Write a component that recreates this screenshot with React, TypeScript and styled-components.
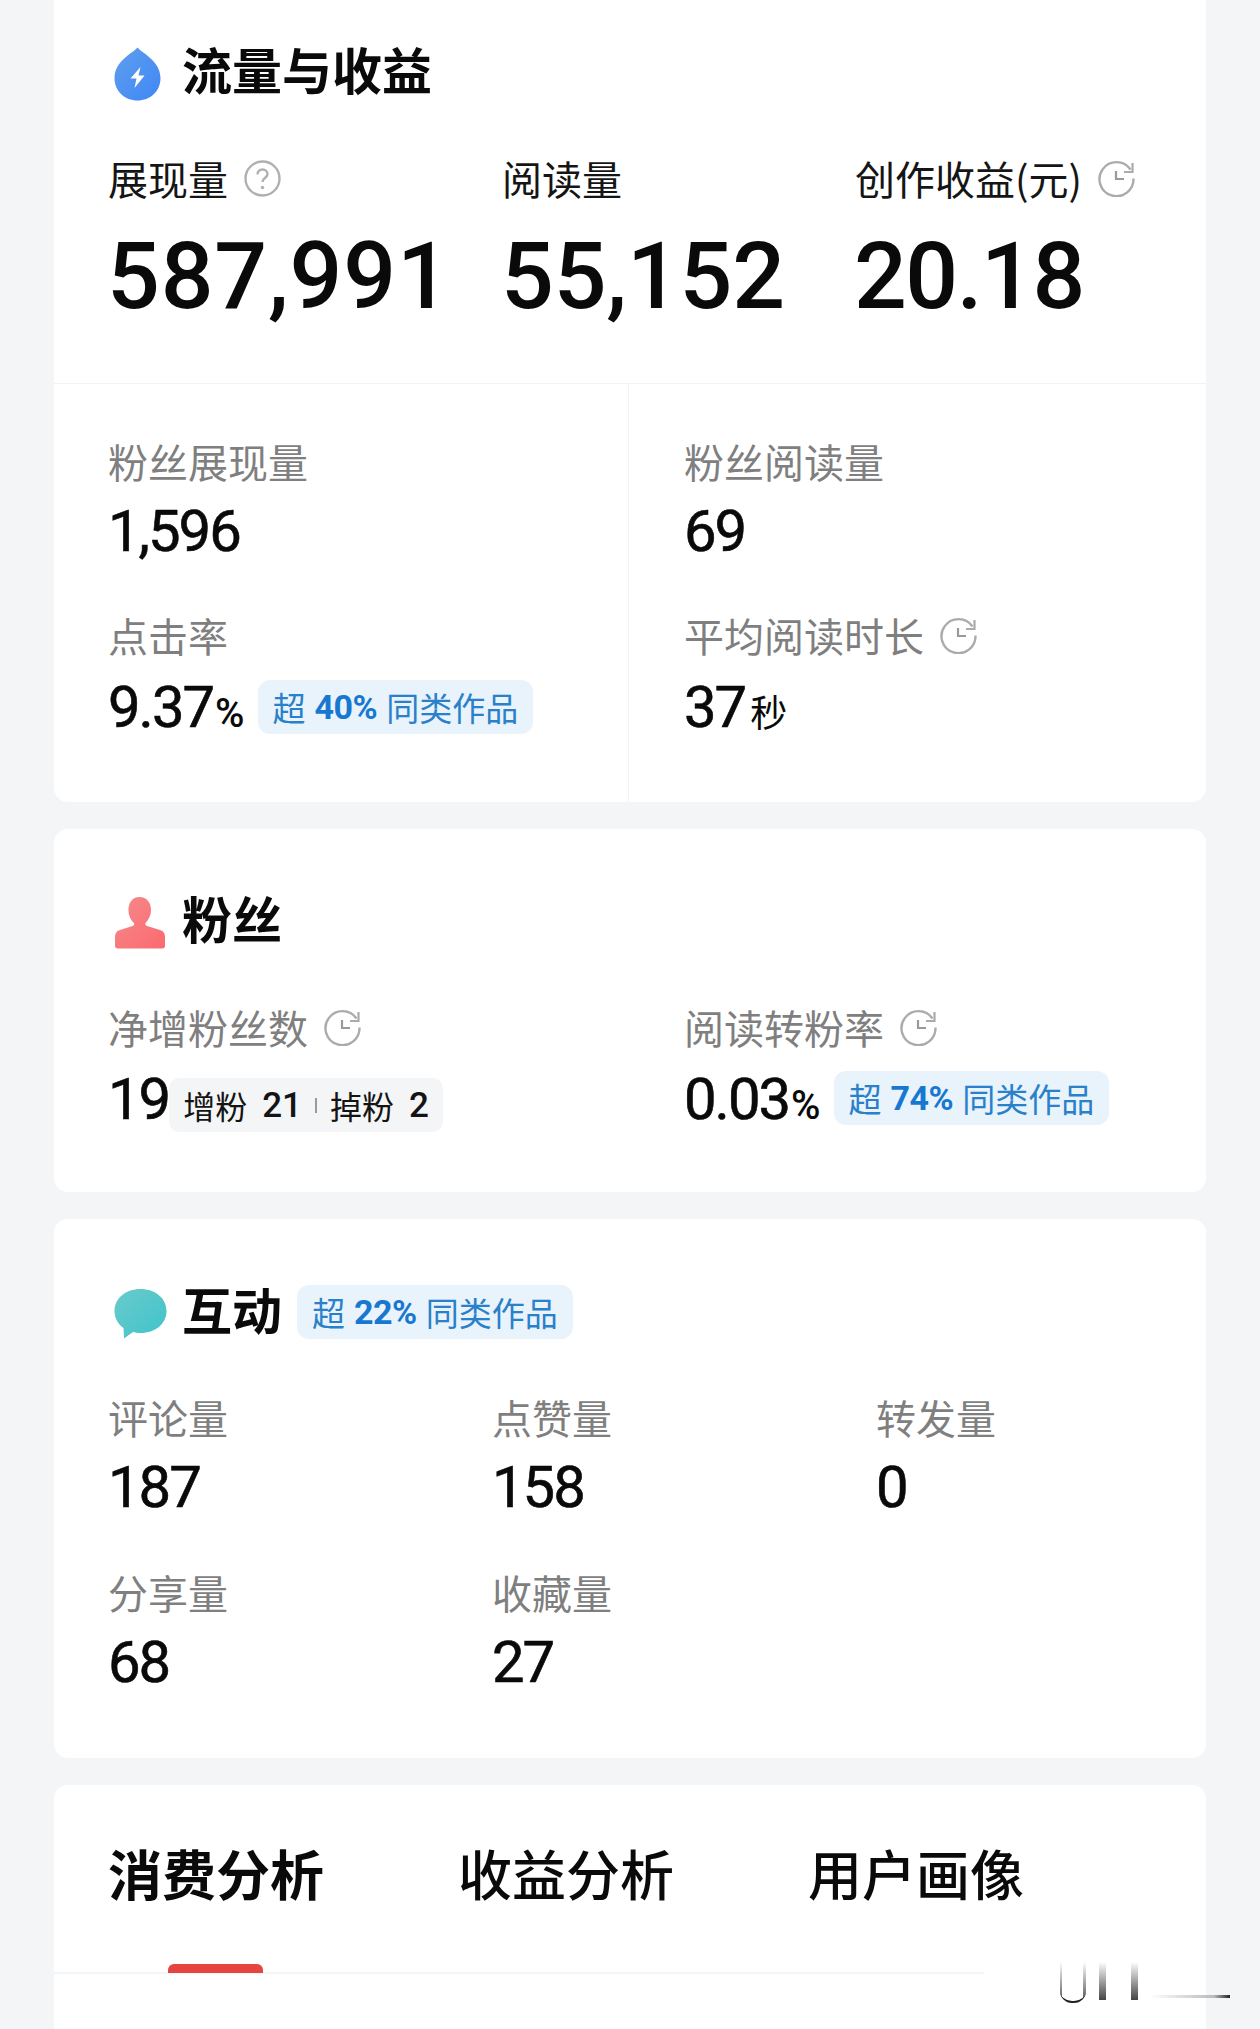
import { FC, ReactNode } from "react";
import styled, { createGlobalStyle } from "styled-components";

const GlobalStyle = createGlobalStyle`
  html, body {
    margin: 0;
    padding: 0;
    background: #f3f5f7;
  }
  body {
    font-family: Roboto, "Noto Sans CJK SC", sans-serif;
    color: #0a0a0a;
  }
`;

const HistoryIcon: FC = () => (
  <HintSvg viewBox="0 0 37 37">
    <path d="M32.500 9.500A17 17 0 1 0 35.500 18.500" fill="none" stroke="#ababab" strokeWidth="2.400" />
    <path d="M34.500 3v9H26" fill="none" stroke="#ababab" strokeWidth="2.200" />
    <path d="M18 11v8h8" fill="none" stroke="#999" strokeWidth="2.200" />
  </HintSvg>
);

const HelpIcon: FC = () => (
  <HintSvg viewBox="0 0 37 37">
    <circle cx="18.500" cy="18.500" r="17" fill="none" stroke="#b0b0b0" strokeWidth="2.400" />
    <path d="M13.500 14.500c0-3 2.200-5 5-5s5 2 5 4.600c0 2-1.200 3-2.800 4.200-1.500 1.100-2.200 2-2.200 3.700" fill="none" stroke="#b0b0b0" strokeWidth="2.400" />
    <circle cx="18.500" cy="27.500" r="1.700" fill="#b0b0b0" />
  </HintSvg>
);

const DropIcon: FC = () => (
  <svg width="47" height="54" viewBox="0 0 47 54">
    <defs>
      <linearGradient id="drop" x1="0" y1="0" x2="1" y2="1">
        <stop offset="0" stopColor="#5f9fee" />
        <stop offset="1" stopColor="#3f87f5" />
      </linearGradient>
    </defs>
    <path d="M23.500 0.500C28 6 46.500 14 46.500 31C46.500 44.500 36 53.500 23.500 53.500C11 53.500 0.500 44.500 0.500 31C0.500 14 19 6 23.500 0.500Z" fill="url(#drop)" />
    <path d="M26.500 20L16.500 31.500H22.500L20.500 41L30.500 28.500H24.500Z" fill="#fff" />
  </svg>
);

const PersonIcon: FC = () => (
  <svg width="52" height="52" viewBox="0 0 52 52">
    <defs>
      <linearGradient id="person" x1="0" y1="0" x2="1" y2="1">
        <stop offset="0" stopColor="#f58a8a" />
        <stop offset="1" stopColor="#fb6a70" />
      </linearGradient>
    </defs>
    <path d="M25.500 0C33 0 37 6 37 13C37 19 34 23.500 31.500 26C31 27 31.500 28.500 33 29L46 33C49.500 34 51 36.500 51 40V49C51 50.500 50 51.500 48.500 51.500H3.500C2 51.500 1 50.500 1 49V40C1 36.500 2.500 34 6 33L18.500 29C20 28.500 20.500 27 20 26C17 23.500 14.500 19 14.500 13C14.500 6 18 0 25.500 0Z" fill="url(#person)" />
  </svg>
);

const ChatIcon: FC = () => (
  <svg width="53" height="50" viewBox="0 0 53 50">
    <defs>
      <linearGradient id="chat" x1="0" y1="0" x2="1" y2="1">
        <stop offset="0" stopColor="#69cbcb" />
        <stop offset="1" stopColor="#3fc3cb" />
      </linearGradient>
    </defs>
    <path d="M26.500 0C41 0 52.500 9 52.500 22C52.500 35 41 44 26.500 44C24 44 21 43.500 19 43L10 49.500L9.500 39C4 35 0.500 29 0.500 22C0.500 9 12 0 26.500 0Z" fill="url(#chat)" />
  </svg>
);

const Badge: FC<{ percent: string; drop?: number }> = ({ percent, drop = 0 }) => (
  <BlueBadge $drop={drop}>
    超 <b>{percent}</b> 同类作品
  </BlueBadge>
);

type StatProps = { label: string; hint?: ReactNode; tall?: boolean; children: ReactNode };

const SmallStat: FC<StatProps> = ({ label, hint, tall, children }) => (
  <StatBlock>
    <GreyLabel>
      {label}
      {hint}
    </GreyLabel>
    <ValueRow $tall={tall}>{children}</ValueRow>
  </StatBlock>
);

const App: FC = () => {
  return (
    <Page>
      <GlobalStyle />

      <TopCard>
        <TrafficHead>
          <TitleIcon>
            <DropIcon />
          </TitleIcon>
          <SectionTitle>流量与收益</SectionTitle>
        </TrafficHead>

        <BigStats>
          <div>
            <DarkLabel>
              展现量
              <HelpIcon />
            </DarkLabel>
            <BigValue $track={0.8}>587,991</BigValue>
          </div>
          <div>
            <DarkLabel>阅读量</DarkLabel>
            <BigValue $track={-0.2}>55,152</BigValue>
          </div>
          <div>
            <DarkLabel>
              创作收益(元)
              <HistoryIcon />
            </DarkLabel>
            <BigValue $track={-1.5}>20.18</BigValue>
          </div>
        </BigStats>

        <SplitGrid>
          <SplitColumn>
            <SmallStat label="粉丝展现量">
              <Value>1,596</Value>
            </SmallStat>
            <SmallStat label="点击率" tall>
              <Value>9.37</Value>
              <Unit>%</Unit>
              <Badge percent="40%" drop={5} />
            </SmallStat>
          </SplitColumn>
          <SplitColumn $right>
            <SmallStat label="粉丝阅读量">
              <Value>69</Value>
            </SmallStat>
            <SmallStat label="平均阅读时长" hint={<HistoryIcon />} tall>
              <Value>37</Value>
              <CnUnit>秒</CnUnit>
            </SmallStat>
          </SplitColumn>
        </SplitGrid>
      </TopCard>

      <FansCard>
        <CardHead>
          <TitleIcon>
            <PersonIcon />
          </TitleIcon>
          <SectionTitle>粉丝</SectionTitle>
        </CardHead>
        <FansGrid>
          <SmallStat label="净增粉丝数" hint={<HistoryIcon />} tall>
            <Value>19</Value>
            <GreyPill>
              增粉<PillNum>21</PillNum>
              <PillBar />
              掉粉<PillNum>2</PillNum>
            </GreyPill>
          </SmallStat>
          <SmallStat label="阅读转粉率" hint={<HistoryIcon />} tall>
            <Value>0.03</Value>
            <Unit>%</Unit>
            <Badge percent="74%" drop={4} />
          </SmallStat>
        </FansGrid>
      </FansCard>

      <InteractCard>
        <CardHead>
          <TitleIcon>
            <ChatIcon />
          </TitleIcon>
          <SectionTitle>互动</SectionTitle>
          <HeadBadge>
            <Badge percent="22%" />
          </HeadBadge>
        </CardHead>
        <InteractGrid>
          <SmallStat label="评论量">
            <Value>187</Value>
          </SmallStat>
          <SmallStat label="点赞量">
            <Value>158</Value>
          </SmallStat>
          <SmallStat label="转发量">
            <Value>0</Value>
          </SmallStat>
          <SmallStat label="分享量">
            <Value>68</Value>
          </SmallStat>
          <SmallStat label="收藏量">
            <Value>27</Value>
          </SmallStat>
        </InteractGrid>
      </InteractCard>

      <TabsCard>
        <TabBar>
          <Tab $active>消费分析</Tab>
          <Tab>收益分析</Tab>
          <Tab>用户画像</Tab>
          <TabMarker />
        </TabBar>
        <Residue>
          <ResidueCup />
          <ResidueLine />
          <ResidueLine />
          <ResidueDot />
        </Residue>
      </TabsCard>
    </Page>
  );
};

export default App;

const Page = styled.div`
  width: 1260px;
  height: 2029px;
  overflow: hidden;
  background: #f3f5f7;
  padding: 0 54px;
  box-sizing: border-box;
  display: flex;
  flex-direction: column;
  gap: 27px;
`;

const Card = styled.section`
  background: #fff;
  border-radius: 14px;
  flex: none;
`;

const TopCard = styled(Card)`
  height: 802px;
  border-radius: 0 0 14px 14px;
  display: flex;
  flex-direction: column;
`;

const FansCard = styled(Card)`
  height: 363px;
  padding: 62px 54px 0;
  box-sizing: border-box;
`;

const InteractCard = styled(Card)`
  height: 539px;
  padding: 63px 54px 0;
  box-sizing: border-box;
`;

const TabsCard = styled(Card)`
  height: 300px;
  border-radius: 14px 14px 0 0;
  position: relative;
`;

const CardHead = styled.div`
  display: flex;
  align-items: center;
  height: 60px;
`;

const TrafficHead = styled(CardHead)`
  margin: 42px 54px 0;
`;

const TitleIcon = styled.span`
  width: 74px;
  padding: 4px 0 0 6px;
  box-sizing: border-box;
  flex: none;
  display: flex;
  align-items: center;
`;

const SectionTitle = styled.h2`
  margin: 0 0 8px;
  font-size: 50px;
  line-height: 60px;
  font-weight: 700;
  font-family: "Noto Sans CJK SC", sans-serif;
`;

const HeadBadge = styled.div`
  margin-left: 2px;
  height: 54px;
  display: flex;
`;

const HintSvg = styled.svg`
  width: 37px;
  height: 37px;
  margin-left: 16px;
  flex: none;
`;

const BigStats = styled.div`
  margin: 50px 54px 0;
  display: grid;
  grid-template-columns: 394px 353px 1fr;
  height: 231px;
`;

const DarkLabel = styled.div`
  display: flex;
  align-items: center;
  height: 52px;
  font-size: 40px;
  line-height: 52px;
  font-family: "Noto Sans CJK SC", sans-serif;
  color: #151515;
  white-space: nowrap;
`;

const BigValue = styled.div<{ $track: number }>`
  margin: 19px 0 0 -1px;
  font-size: 93px;
  line-height: 108px;
  font-weight: 500;
  letter-spacing: ${(p) => p.$track}px;
  color: #0a0a0a;
`;

const SplitGrid = styled.div`
  flex: 1;
  display: grid;
  grid-template-columns: 574px 1fr;
  border-top: 1px solid #f3f3f3;
`;

const SplitColumn = styled.div<{ $right?: boolean }>`
  padding: 51px 0 0 ${(p) => (p.$right ? "55px" : "54px")};
  display: flex;
  flex-direction: column;
  gap: 46px;
  border-left: ${(p) => (p.$right ? "1px solid #f3f3f3" : "none")};
`;

const StatBlock = styled.div`
  min-width: 0;
`;

const GreyLabel = styled.div`
  display: flex;
  align-items: center;
  height: 52px;
  font-size: 40px;
  line-height: 52px;
  font-family: "Noto Sans CJK SC", sans-serif;
  color: #7f7f7f;
  white-space: nowrap;
`;

const ValueRow = styled.div<{ $tall?: boolean }>`
  margin-top: ${(p) => (p.$tall ? "14px" : "12px")};
  height: 64px;
  display: flex;
  align-items: baseline;
  white-space: nowrap;
`;

const Value = styled.span`
  font-size: 58px;
  line-height: 64px;
  font-weight: 400;
  -webkit-text-stroke: 0.6px #0a0a0a;
  letter-spacing: -2px;
  color: #0a0a0a;
`;

const Unit = styled.span`
  margin-left: 2px;
  font-size: 40px;
  font-weight: 500;
`;

const CnUnit = styled.span`
  margin-left: 5px;
  font-size: 37px;
  font-family: "Noto Sans CJK SC", sans-serif;
`;

const BlueBadge = styled.span<{ $drop: number }>`
  display: inline-flex;
  align-items: center;
  gap: 9px;
  height: 54px;
  padding: 0 15px;
  margin: ${(p) => p.$drop}px 0 0 13px;
  border-radius: 12px;
  background: #e8f3fc;
  color: #2a80c9;
  font-size: 33px;
  font-family: "Noto Sans CJK SC", sans-serif;
  align-self: flex-start;
  white-space: nowrap;

  b {
    font-family: Roboto, sans-serif;
    font-weight: 700;
    font-size: 34px;
    letter-spacing: -0.500px;
    color: #1878d0;
  }
`;

const GreyPill = styled.span`
  display: inline-flex;
  align-items: center;
  height: 54px;
  padding: 0 14px;
  margin-top: 11px;
  border-radius: 10px;
  background: #f3f5f7;
  font-size: 32px;
  font-family: "Noto Sans CJK SC", sans-serif;
  color: #141414;
  align-self: flex-start;
`;

const PillNum = styled.span`
  margin-left: 15px;
  font-family: Roboto, sans-serif;
  font-size: 35px;
  font-weight: 500;
`;

const PillBar = styled.i`
  width: 2px;
  height: 15px;
  margin: 0 13px;
  background: #9a9a9a;
`;

const FansGrid = styled.div`
  margin-top: 50px;
  display: grid;
  grid-template-columns: 576px 1fr;
`;

const InteractGrid = styled.div`
  margin-top: 49px;
  display: grid;
  grid-template-columns: 384px 384px 1fr;
  row-gap: 47px;
`;

const TabBar = styled.div`
  position: relative;
  display: flex;
  height: 189px;
  padding-left: 54px;
  box-sizing: border-box;
  border-bottom: 2px solid #f4f5f6;
`;

const Tab = styled.div<{ $active?: boolean }>`
  width: 350px;
  padding-top: 53px;
  font-size: 54px;
  line-height: 70px;
  font-weight: ${(p) => (p.$active ? 700 : 500)};
  font-family: "Noto Sans CJK SC", sans-serif;
  color: #0a0a0a;
`;

const TabMarker = styled.i`
  position: absolute;
  left: 114px;
  bottom: -1px;
  width: 95px;
  height: 9px;
  border-radius: 6px 6px 0 0;
  background: #e5443f;
`;

const Residue = styled.div`
  position: absolute;
  left: 930px;
  top: 177px;
  width: 222px;
  height: 38px;
  background: #fff;
  display: flex;
  padding-left: 76px;
  box-sizing: border-box;
`;

const ResidueCup = styled.i`
  width: 26px;
  height: 41px;
  margin-right: 13px;
  border-bottom: 2px solid #222;
  border-radius: 0 0 12px 12px;
  box-sizing: border-box;
  background:
    linear-gradient(#fff, #555) left / 2px 100% no-repeat,
    linear-gradient(#fff, #555) right / 3px 100% no-repeat;
`;

const ResidueLine = styled.i`
  width: 7px;
  height: 38px;
  margin-right: 25px;
  background: linear-gradient(#fff, #444);
`;

const ResidueDot = styled.i`
  position: absolute;
  right: -24px;
  bottom: 2px;
  width: 80px;
  height: 3px;
  background: linear-gradient(to right, #fff, #bbb 80%, #222);
`;
